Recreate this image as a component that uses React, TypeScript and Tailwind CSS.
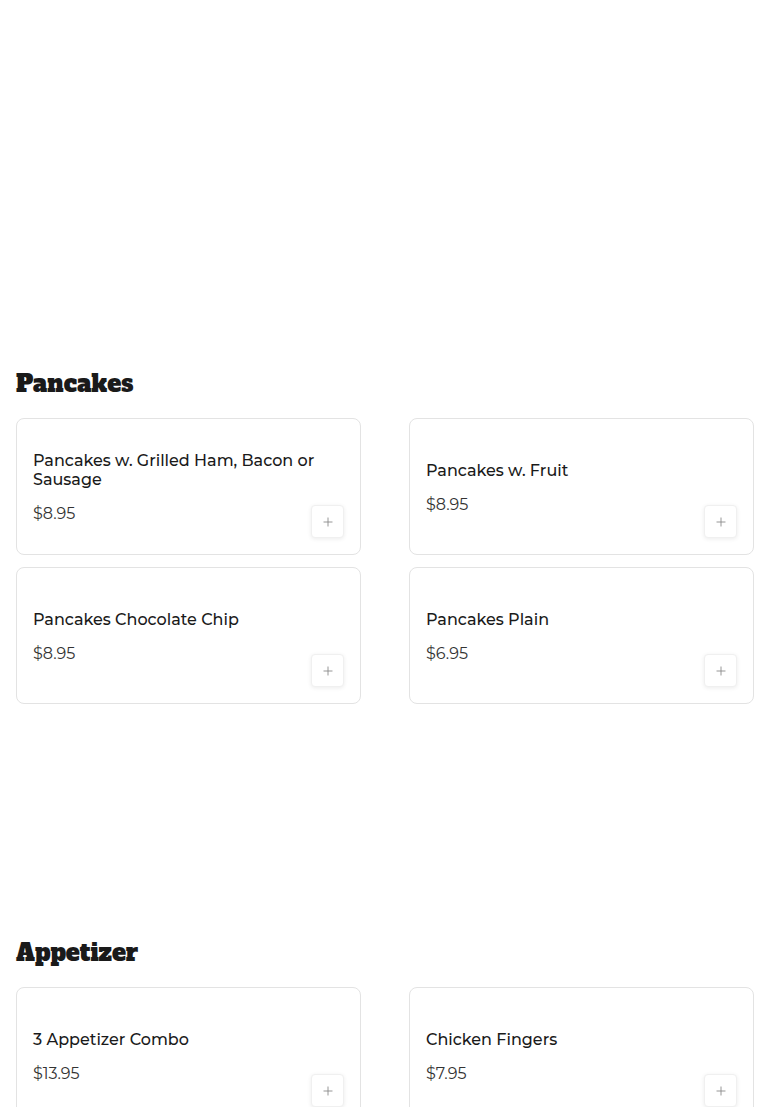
import { Plus } from "lucide-react";

type Item = { name: string; price: string };

const sections: { title: string; items: Item[] }[] = [
  {
    title: "Pancakes",
    items: [
      { name: "Pancakes w. Grilled Ham, Bacon or Sausage", price: "$8.95" },
      { name: "Pancakes w. Fruit", price: "$8.95" },
      { name: "Pancakes Chocolate Chip", price: "$8.95" },
      { name: "Pancakes Plain", price: "$6.95" },
    ],
  },
  {
    title: "Appetizer",
    items: [
      { name: "3 Appetizer Combo", price: "$13.95" },
      { name: "Chicken Fingers", price: "$7.95" },
      { name: "Mozzarella Sticks", price: "$7.95" },
      { name: "Onion Rings", price: "$5.95" },
    ],
  },
];

const ItemCard: React.FC<{ item: Item }> = ({ item }) => {
  return (
    <div className="relative flex h-[137px] items-center rounded-lg border border-[#e3e3e3] bg-white p-4">
      <div className="w-full pt-[2px]">
        <h3 className="text-[16px] leading-[19px] font-medium text-[#1a1a1a]">{item.name}</h3>
        <p className="mt-[15px] text-[16px] leading-[20px] text-[#333]">{item.price}</p>
      </div>
      <button className="absolute right-4 bottom-4 flex h-[33px] w-[33px] items-center justify-center rounded border border-[#f0f0f0] bg-white text-[#888] shadow-[0_1px_4px_rgba(0,0,0,0.08)]">
        <Plus size={14} strokeWidth={1.5} />
      </button>
    </div>
  );
};

export default function App() {
  return (
    <div className="min-h-screen bg-white px-4 pt-[370px] font-['Montserrat','Open_Sans',sans-serif]">
      {sections.map((s, i) => (
        <section key={s.title} className={i > 0 ? "mt-[235px]" : ""}>
          <h2 className="mb-[20px] text-[23.5px] leading-[28px] font-normal text-[#1a1a1a] font-['Alfa_Slab_One','DejaVu_Serif',serif]">
            {s.title}
          </h2>
          <div className="grid grid-cols-2 gap-x-12 gap-y-3">
            {s.items.map((item) => (
              <ItemCard key={item.name} item={item} />
            ))}
          </div>
        </section>
      ))}
    </div>
  );
}
